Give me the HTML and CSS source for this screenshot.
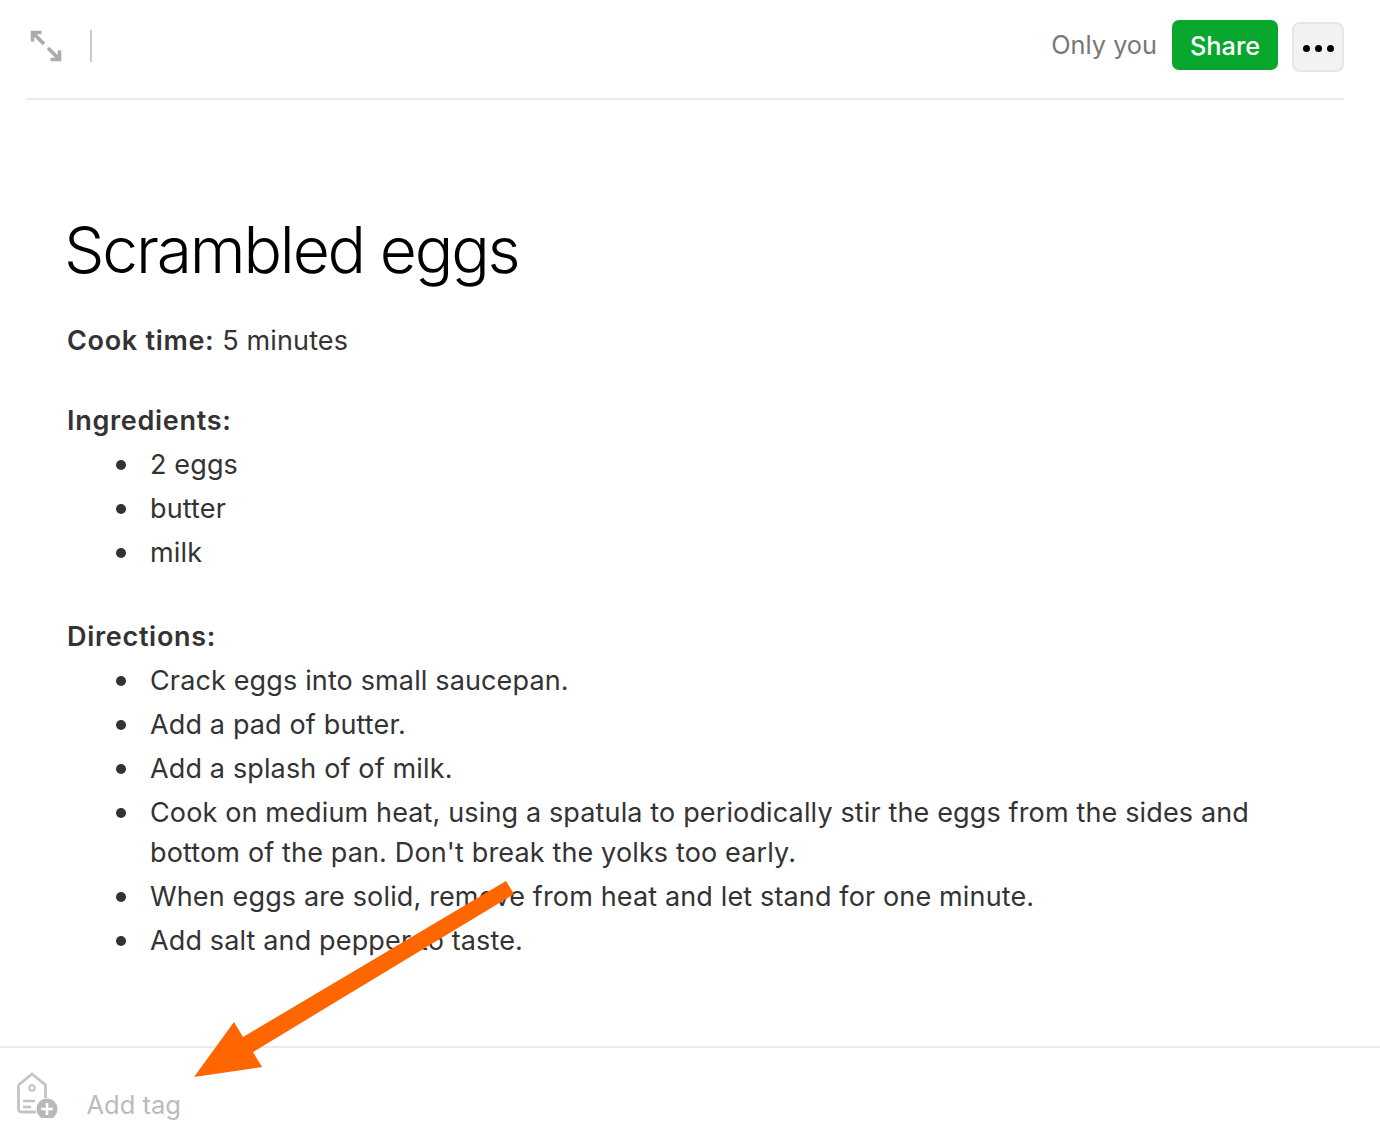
FILE: index.html
```html
<!DOCTYPE html>
<html lang="en">
<head>
    <meta charset="UTF-8">
    <meta name="viewport" content="width=device-width, initial-scale=1.0">
    <title>Scrambled eggs</title>
    <link rel="stylesheet" href="styles.css">
</head>
<body>
    <header class="toolbar">
        <div class="toolbar-left">
            <svg class="expand-icon" width="32" height="32" viewBox="0 0 32 32" fill="none" stroke="#ababab" stroke-width="3.6">
                <path d="M2.500 11.500V2.500h9M2.500 2.500l11.500 11.500M18 18l11.500 11.500M20.500 29.500h9v-9"/>
            </svg>
            <span class="divider"></span>
        </div>
        <div class="toolbar-right">
            <span class="visibility">Only you</span>
            <button class="share">Share</button>
            <button class="more"><span></span><span></span><span></span></button>
        </div>
    </header>

    <main class="note">
        <h1>Scrambled eggs</h1>
        <p class="cook-time"><b>Cook time:</b> 5 minutes</p>

        <p class="heading first"><b>Ingredients:</b></p>
        <ul>
            <li>2 eggs</li>
            <li>butter</li>
            <li>milk</li>
        </ul>

        <p class="heading"><b>Directions:</b></p>
        <ul>
            <li>Crack eggs into small saucepan.</li>
            <li>Add a pad of butter.</li>
            <li>Add a splash of of milk.</li>
            <li>Cook on medium heat, using a spatula to periodically stir the eggs from the sides and bottom of the pan. Don't break the yolks too early.</li>
            <li>When eggs are solid, remove from heat and let stand for one minute.</li>
            <li>Add salt and pepper to taste.</li>
        </ul>
    </main>

    <footer class="tags">
        <svg class="tag-icon" width="44" height="46" viewBox="0 0 44 46" fill="none">
            <path d="M2.500 13L16 2l13.500 11v13M20 40H5.500a3 3 0 0 1-3-3V13" stroke="#c4c4c4" stroke-width="2.800"/>
            <circle cx="16" cy="16" r="2.800" stroke="#c4c4c4" stroke-width="2"/>
            <path d="M7 29h12M7 35h8" stroke="#c4c4c4" stroke-width="2.400"/>
            <circle cx="31" cy="37" r="10.500" fill="#b8b8b8"/>
            <path d="M31 31v12M25 37h12" stroke="#fff" stroke-width="2.600"/>
        </svg>
        <span class="add-tag">Add tag</span>
    </footer>

    <svg class="arrow" width="1380" height="1138" viewBox="0 0 1380 1138">
        <polygon points="506,881 514,894 253,1052 262,1067 194,1077 234,1022 243,1037" fill="#ff6600"/>
    </svg>
</body>
</html>
```

FILE: styles.css
```css
* {
    margin: 0;
    padding: 0;
    box-sizing: border-box;
}

body {
    position: relative;
    height: 1138px;
    overflow: hidden;
    background: #fff;
    color: #333;
    font-family: 'Inter', 'Liberation Sans', sans-serif;
    font-size: 27px;
    line-height: 40px;
    letter-spacing: 0.14px;
}

.toolbar {
    display: flex;
    justify-content: space-between;
    align-items: center;
    height: 100px;
    margin: 0 36px 0 26px;
    padding-bottom: 8px;
    border-bottom: 2px solid #ebebeb;
}

.toolbar-left {
    display: flex;
    align-items: center;
    gap: 28px;
    padding: 1px 0 0 4px;
}

.divider {
    width: 2px;
    height: 32px;
    background: #c9c9c9;
}

.toolbar-right {
    display: flex;
    align-items: center;
}

.visibility {
    margin-right: 15px;
    color: #777;
    font-size: 25.3px;
    letter-spacing: 0;
}

button {
    border: none;
    cursor: pointer;
    font-family: inherit;
}

.share {
    width: 106px;
    height: 50px;
    margin-right: 14px;
    border-radius: 7px;
    background: #08a82f;
    color: #fff;
    font-size: 25.3px;
    font-weight: 500;
}

.more {
    display: flex;
    justify-content: center;
    align-items: center;
    gap: 5px;
    width: 52px;
    height: 50px;
    margin-top: 4px;
    padding-top: 2px;
    border: 2px solid #e6e6e6;
    border-radius: 8px;
    background: #f2f2f2;
}

.more span {
    width: 7px;
    height: 7px;
    border-radius: 50%;
    background: #000;
}

.note {
    height: 946px;
    padding: 110px 66px 0 67px;
}

h1 {
    margin: 0 0 31px -3px;
    color: #000;
    font-size: 64px;
    font-weight: 300;
    line-height: 80px;
    letter-spacing: -2.15px;
}

b {
    font-weight: 600;
    letter-spacing: 0.7px;
}

.heading {
    margin-top: 44px;
}

.heading.first {
    margin-top: 40px;
}

ul {
    padding-left: 49px;
    list-style: none;
}

li {
    display: flex;
    margin-top: 4px;
}

li::before {
    content: "";
    flex: none;
    width: 10px;
    height: 10px;
    margin: 15px 24px 0 0;
    border-radius: 50%;
    background: #333;
}

.tags {
    display: flex;
    align-items: flex-start;
    height: 92px;
    padding: 24px 0 0 16px;
    border-top: 2px solid #ebebeb;
}

.add-tag {
    margin: 13px 0 0 26.5px;
    color: #bbb;
    font-size: 25.5px;
    letter-spacing: 0;
}

.arrow {
    position: absolute;
    top: 0;
    left: 0;
    pointer-events: none;
}
```
